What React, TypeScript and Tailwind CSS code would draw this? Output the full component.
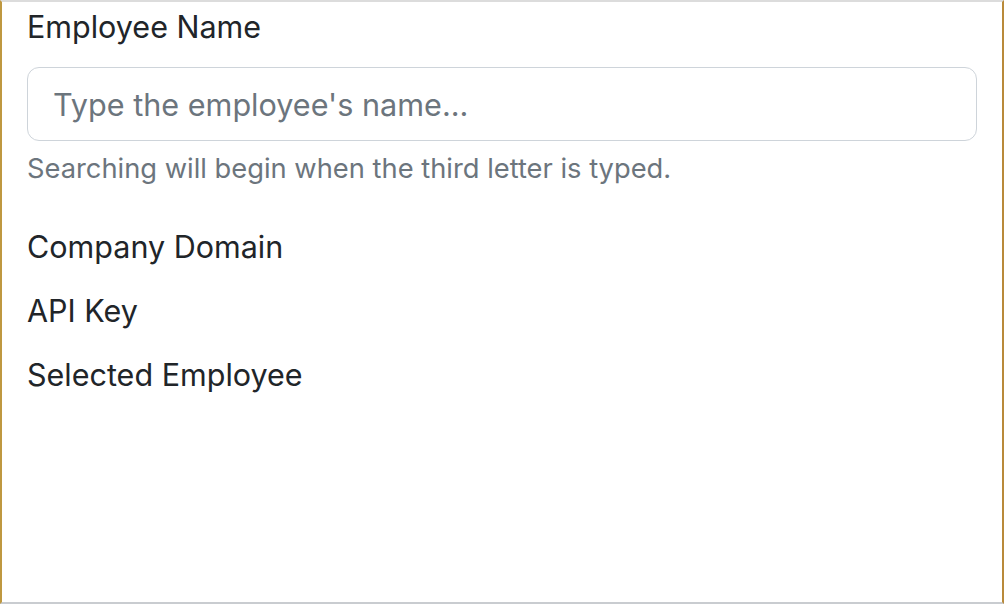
export default function App() {
  return (
    <div className="w-[1004px] h-[604px] bg-white border-2 border-t-[#dcdcdc] border-b-[#c9ccd0] border-l-[#bf9840] border-r-[#b98a3a] px-[25px] pt-[1px] font-['Inter','Noto_Sans',sans-serif] text-[#212529]">
      <form>
        <label className="block text-[30.5px] leading-[48px]">Employee Name</label>
        <input
          type="text"
          placeholder="Type the employee's name..."
          className="mt-[16px] block w-[950px] h-[74px] rounded-[12px] border-[1.5px] border-[#ced4da] px-[25px] text-[30.6px] placeholder:text-[#6c757d] outline-none"
        />
        <div className="mt-[7px] text-[27.3px] leading-[42px] text-[#6c757d]">
          Searching will begin when the third letter is typed.
        </div>
        <div className="mt-[33px] flex flex-col gap-[16px]">
          <label className="block text-[30.5px] leading-[48px]">Company Domain</label>
          <label className="block text-[30.5px] leading-[48px]">API Key</label>
          <label className="block text-[30.5px] leading-[48px]">Selected Employee</label>
        </div>
      </form>
    </div>
  )
}
